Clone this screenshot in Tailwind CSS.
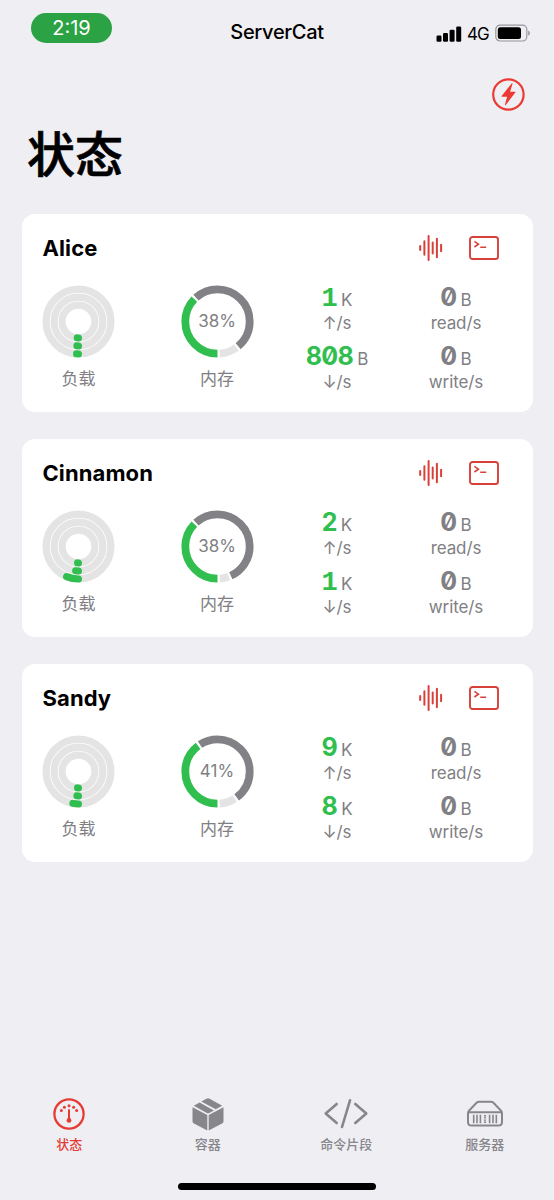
<!DOCTYPE html>
<html lang="zh-CN">
<head>
<meta charset="utf-8">
<title>ServerCat</title>
<script src="https://cdn.jsdelivr.net/npm/@tailwindcss/browser@4"></script>
</head>
<body class="w-[554px] h-[1200px] overflow-hidden bg-[#efeef3] font-['Inter','Noto_Sans_CJK_SC',sans-serif] text-black flex flex-col">
  <header class="h-[64px] shrink-0 grid grid-cols-3 items-start">
    <div class="pl-[31px] pt-[13px]"><div class="w-[81px] h-[30px] rounded-full bg-[#2ba344] text-white text-[20px] leading-[31px] text-center">2:19</div></div>
    <div class="pt-[20px] text-center text-[20px] leading-[24px] font-medium tracking-[-0.3px]">ServerCat</div>
    <div class="pt-[23px] pr-[23px] flex justify-end items-center">
      <svg width="26" height="17" viewBox="0 0 26 17"><rect x="0.5" y="10.5" width="5" height="6.2" rx="1.2"/><rect x="7" y="8" width="5" height="8.7" rx="1.2"/><rect x="13.6" y="4.8" width="5" height="11.9" rx="1.2"/><rect x="20.2" y="1.5" width="5" height="15.2" rx="1.2"/></svg>
      <span class="ml-[5px] text-[17px] leading-[18px] w-[22px] tracking-[-0.9px] pt-[2px]">4G</span>
      <svg class="ml-[6px]" width="36" height="18" viewBox="0 0 36 18"><rect x="0.8" y="1.2" width="31" height="15.8" rx="4.2" fill="none" stroke="#98979c" stroke-width="1.2"/><rect x="2.8" y="3.2" width="23.2" height="11.8" rx="2.5"/><path d="M33.2 6.7c2.2.6 2.2 4.2 0 4.8z" fill="#98979c"/></svg>
    </div>
  </header>

  <div class="h-[60px] shrink-0 flex justify-end pr-[28px] pt-[13px]">
    <svg width="35" height="35" viewBox="0 0 35 35" fill="none"><circle cx="17.4" cy="17.5" r="15.2" stroke="#ea3a33" stroke-width="2.2"/><path d="M20.7 6.5 10.6 18.9c-.3.4-.1.8.4.8h5.1L14 27.6c-.1.6.4.7.7.3l9.6-12.3c.3-.4.1-.8-.4-.8h-4.8l2.4-7.9c.1-.6-.4-.8-.8-.4z" fill="#ea3a33"/></svg>
  </div>
  <h1 class="h-[90px] shrink-0 pl-[27px] text-[48px] leading-[62px] font-medium [-webkit-text-stroke:0.7px_black]">状态</h1>

  <main id="servers" class="px-[21.5px] flex flex-col gap-[27px]"></main>

  <nav class="mt-auto h-[80px] shrink-0 grid grid-cols-4 text-[13px] leading-[18px] text-[#87868b] font-medium">
    <div class="flex flex-col items-center text-[#e63b35]">
      <svg width="34" height="34" viewBox="0 0 34 34" fill="none" stroke="currentColor"><circle cx="17" cy="17" r="14.6" stroke-width="2.3"/><path d="M17 13v10" stroke-width="2" stroke-linecap="round"/><g fill="currentColor" stroke="none"><circle cx="17" cy="23.4" r="2.4"/><circle cx="9.3" cy="13.6" r="1.5"/><circle cx="12.4" cy="10.3" r="1.5"/><circle cx="17" cy="8.8" r="1.5"/><circle cx="21.6" cy="10.3" r="1.5"/><circle cx="24.7" cy="13.6" r="1.5"/></g></svg>
      <span class="mt-[4px]">状态</span>
    </div>
    <div class="flex flex-col items-center">
      <svg width="34" height="34" viewBox="0 0 34 34" fill="currentColor"><path d="M1.5 10.2 16.3 17.9V33.5L3 26.6a2.6 2.6 0 0 1-1.5-2.4z"/><path d="M32.5 10.2 17.7 17.9V33.5L31 26.6a2.6 2.6 0 0 0 1.5-2.4z"/><path d="M2.8 8.7 8.6 5.6 22.9 13.4 18.2 15.9a2.5 2.5 0 0 1-2.4 0z"/><path d="M10.3 4.6 15.4 1.8a3.2 3.2 0 0 1 3.2 0L31.2 8.7 24.7 12.3z"/></svg>
      <span class="mt-[4px]">容器</span>
    </div>
    <div class="flex flex-col items-center">
      <svg width="46" height="34" viewBox="0 0 46 34" fill="none" stroke="currentColor" stroke-width="2.6" stroke-linecap="round" stroke-linejoin="round"><path d="M13.7 7 2.7 16.5l11 9.5M32.3 7l11 9.5-11 9.5M27 3.3 19 30"/></svg>
      <span class="mt-[4px]">命令片段</span>
    </div>
    <div class="flex flex-col items-center">
      <svg width="38" height="34" viewBox="0 0 38 34" fill="none" stroke="currentColor" stroke-width="2" stroke-linejoin="round"><path d="M2 16.500c0-1.400.5-2.400 1.400-3.300l7.200-7.400c.7-.7 1.400-1 2.400-1h12c1 0 1.700.3 2.400 1l7.200 7.400c.9.900 1.400 1.900 1.400 3.300V25c0 2.400-1.400 3.600-3.600 3.600H5.600C3.400 28.600 2 27.400 2 25z"/><path d="M2.500 15.200h33"/><path d="M7.700 17.800v8.400M11 17.800v8.400M14.400 17.800v8.400M23.600 17.800v8.400M27 17.800v8.400M30.300 17.800v8.400" stroke-width="1.600"/><path d="M19 18v8.200" stroke-width="2.200" stroke-dasharray="1.400 .8"/></svg>
      <span class="mt-[4px]">服务器</span>
    </div>
  </nav>
  <footer class="h-[23px] shrink-0 flex justify-center pt-[6px]"><div class="w-[198px] h-[7px] rounded-full bg-black"></div></footer>

<script>
const servers = [
  { name: 'Alice', load: [2, 1.7, 1.3], mem: [38, 134, 320], up: ['1', 'K'], down: ['808', 'B'] },
  { name: 'Cinnamon', load: [12.2, 3, 1], mem: [38, 134, 335.5], up: ['2', 'K'], down: ['1', 'K'] },
  { name: 'Sandy', load: [5.7, 1.7, 1], mem: [41, 143, 323.5], up: ['9', 'K'], down: ['8', 'K'] },
];
const radii = [32.4, 24.4, 16.4];
const ring = (r, len) => `<circle cx="36.5" cy="36.5" r="${r}" stroke="#e4e4e4" stroke-width="7.2"/><circle cx="36.5" cy="36.5" r="${r}" stroke="#30bf4f" stroke-width="7" stroke-linecap="round" stroke-dasharray="${len} 400"/>`;
const arc = (from, to, color) => `<circle cx="36.5" cy="36.5" r="32.2" stroke="${color}" stroke-width="7.8" pathLength="360" stroke-dasharray="${to - from} 720" stroke-dashoffset="${-from}"/>`;
const stat = (n, unit, label, color) => `
  <div class="h-[59px] pt-px flex flex-col items-center">
    <div class="h-[29px] flex items-baseline gap-[4px] leading-[28px]"><span class="text-[25px] font-bold tracking-[-0.6px] [font-feature-settings:'zero'] ${color}">${n === '1' ? `<span class="font-['Liberation_Mono'] text-[27px]">1</span>` : n}</span><span class="text-[17px]">${unit}</span></div>
    <div class="text-[17px] leading-[22px] tracking-[-0.1px]">${label}</div>
  </div>`;
document.getElementById('servers').innerHTML = servers.map(s => `
  <section class="h-[198px] rounded-[13px] bg-white pl-[21px] pr-[33px] text-[#808084]">
    <div class="h-[68px] flex items-center">
      <h2 class="text-[22px] font-bold text-black tracking-[0.1px]">${s.name}</h2>
      <svg class="ml-auto" width="26" height="28" viewBox="0 0 26 28" stroke="#d8403a" stroke-width="2" stroke-linecap="round"><path d="M2.2 12v4M6.4 7.2v13.6M10.6 2v24M14.7 8.6v10.8M18.9 4.8v18.4M23.1 10.8v6.4"/></svg>
      <svg class="ml-[25px] mr-px" width="30" height="24" viewBox="0 0 30 24" fill="none" stroke="#d8403a" stroke-width="1.9"><rect x="1" y="1" width="28" height="22" rx="2.6"/><path d="m5.4 5.4 4 2.8-4 2.8M11.2 11.2h6" stroke-width="1.6"/></svg>
    </div>
    <div class="flex w-[457px]">
      <div class="shrink-0 w-[72px] pt-[3px] flex flex-col items-center">
        <svg class="shrink-0" width="73" height="73" viewBox="0 0 73 73" fill="none"><g transform="rotate(90 36.5 36.5)">${radii.map((r, i) => ring(r, s.load[i])).join('')}</g></svg>
        <span class="mt-[9px] text-[17px] leading-[24px]">负载</span>
      </div>
      <div class="shrink-0 ml-[66px] w-[73px] pt-[3px] flex flex-col items-center">
        <div class="grid place-items-center">
          <svg class="col-start-1 row-start-1" width="73" height="73" viewBox="0 0 73 73" fill="none"><g transform="rotate(90 36.5 36.5)">${arc(0, s.mem[1], '#30bf4f')}${arc(s.mem[1] + 4, s.mem[2], '#828286')}${arc(s.mem[2] + 4, 356, '#e4e4e4')}</g></svg>
          <span class="col-start-1 row-start-1 pt-px text-[17px]">${s.mem[0]}%</span>
        </div>
        <span class="mt-[9px] text-[17px] leading-[24px]">内存</span>
      </div>
      <div class="shrink-0 ml-[24.5px] w-[118px]">${stat(s.up[0], s.up[1], '↑/s', 'text-[#30bf4f]')}${stat(s.down[0], s.down[1], '↓/s', 'text-[#30bf4f]')}</div>
      <div class="shrink-0 w-[120px]">${stat('0', 'B', 'read/s', '')}${stat('0', 'B', 'write/s', '')}</div>
    </div>
  </section>`).join('');
</script>
</body>
</html>
